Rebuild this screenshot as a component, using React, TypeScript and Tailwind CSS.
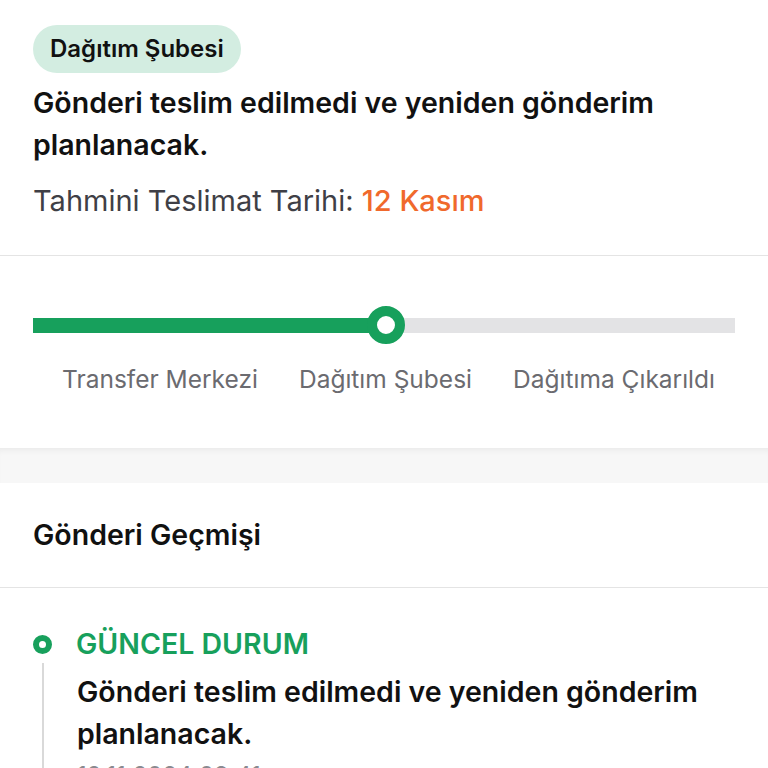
import React from 'react'

const steps = ['Transfer Merkezi', 'Dağıtım Şubesi', 'Dağıtıma Çıkarıldı']

export default function App() {
  const progress = 50

  return (
    <div className="w-[768px] h-[768px] overflow-hidden bg-white text-[#111] font-['Inter','Noto_Sans',sans-serif]">
      {/* summary */}
      <section className="px-[33px] pt-[25px] pb-[36px] border-b border-[#e4e4e4]">
        <span className="inline-flex items-center h-[48px] px-[17px] rounded-full bg-[#d3ede1] text-[24px] font-semibold text-[#111]">
          Dağıtım Şubesi
        </span>
        <h1 className="mt-[9px] text-[28.5px] leading-[42px] font-semibold text-[#111]">
          Gönderi teslim edilmedi ve yeniden gönderim planlanacak.
        </h1>
        <p className="mt-[17px] text-[29px] leading-[36px] text-[#3f3f46]">
          Tahmini Teslimat Tarihi: <span className="font-medium text-[#f0692c]">12 Kasım</span>
        </p>
      </section>

      {/* progress */}
      <section className="px-[33px] pt-[50px] pb-[54px]">
        <div className="relative h-[38px] flex items-center">
          <div className="w-full h-[15px] bg-[#e3e3e5]">
            <div className="h-full bg-[#17a05c]" style={{ width: `${progress}%` }} />
          </div>
          <div
            className="absolute top-0 w-[38px] h-[38px] -ml-[17px] rounded-full border-[10px] border-[#17a05c] bg-white"
            style={{ left: `${progress}%` }}
          />
        </div>
        <div className="mt-[20px] flex justify-between pl-[29px] pr-[20px] text-[24.5px] leading-[30px] text-[#6b6b70]">
          {steps.map(s => (
            <span key={s}>{s}</span>
          ))}
        </div>
      </section>

      {/* spacer band */}
      <div className="h-[35px] bg-[#f7f7f7] shadow-[inset_0_6px_6px_-4px_rgba(0,0,0,0.06)]" />

      {/* history */}
      <section>
        <h2 className="px-[33px] h-[105px] flex items-center text-[28.5px] font-semibold text-[#111] border-b border-[#e4e4e4]">
          Gönderi Geçmişi
        </h2>
        <div className="px-[33px] pt-[41px]">
          <div className="flex items-center gap-[24px] h-[30px]">
            <span className="w-[19px] h-[19px] rounded-full border-[6px] border-[#17a05c] bg-white shrink-0" />
            <span className="text-[28.5px] font-semibold text-[#17a05c]">GÜNCEL DURUM</span>
          </div>
          <div className="ml-[9px] mt-[4px] border-l-2 border-[#d9d9d9] pl-[33px]">
            <p className="pt-[8px] text-[28.5px] leading-[42px] font-semibold text-[#111]">
              Gönderi teslim edilmedi ve yeniden gönderim planlanacak.
            </p>
            <p className="mt-[6px] text-[24px] leading-[30px] text-[#8a8a8f]">12.11.2024 09:41</p>
          </div>
        </div>
      </section>
    </div>
  )
}
